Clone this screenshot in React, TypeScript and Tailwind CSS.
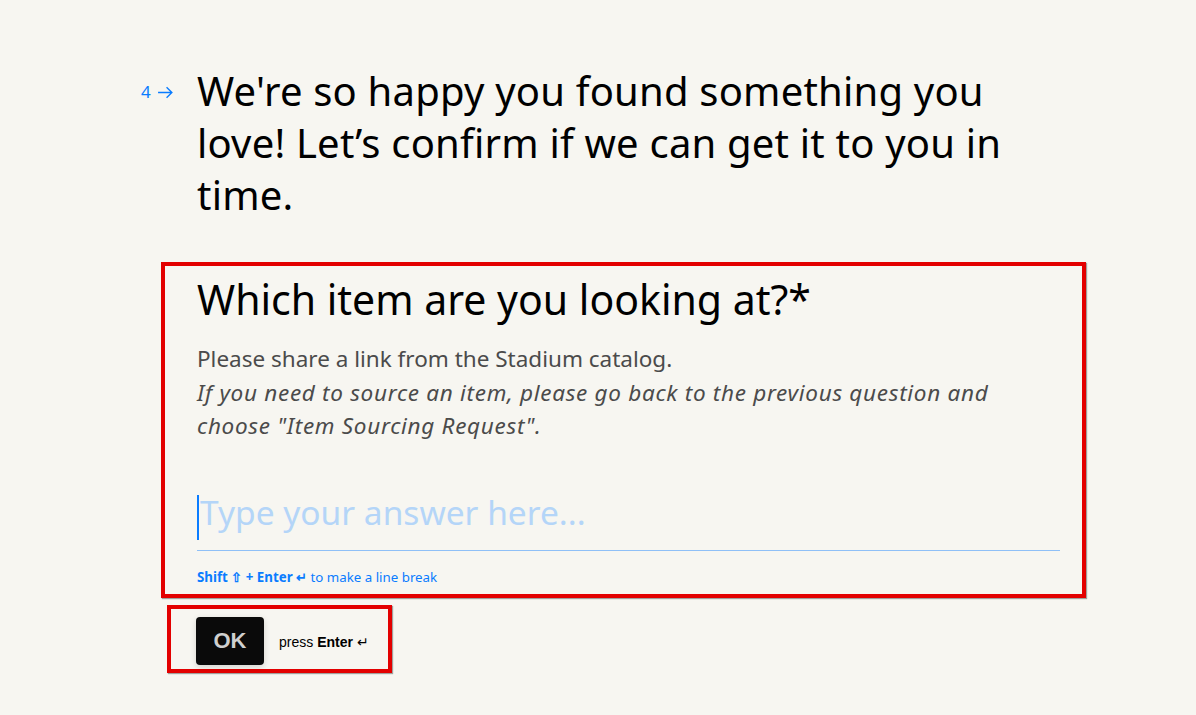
import React from "react";

const font = { fontFamily: '"Noto Sans", "Open Sans", sans-serif' };
const arial = { fontFamily: '"Liberation Sans", Arial, sans-serif' };

export default function App() {
  return (
    <div className="min-h-screen w-full bg-[#f7f6f1] text-black" style={font}>
      <div className="pl-[141px] pt-[65px]">
        {/* Question header */}
        <div className="flex">
          <div className="w-[56px] pt-[15px] flex items-start gap-[6px] text-[#0a7cff] text-[17px] leading-[24px]">
            <span>4</span>
            <svg width="17" height="17" viewBox="0 0 16 16" className="mt-[4px]" fill="none" stroke="currentColor" strokeWidth="1.3">
              <path d="M1 8h13M9 3l5 5-5 5" />
            </svg>
          </div>
          <h1 className="w-[864px] text-[40px] leading-[52px] tracking-[0.2px] font-normal">
            We're so happy you found something you love! Let’s confirm if we can get it to you in time.
          </h1>
        </div>

        {/* Question box */}
        <div className="ml-[20px] mt-[41px] w-[925px] border-4 border-[#e30000] shadow-[1px_1px_1px_rgba(0,0,0,0.35)] pl-[32px] pr-[22px] pt-[10px] pb-[9px]">
          <h2 className="text-[41px] leading-[46px] font-normal">
            Which item are you looking at?*
          </h2>
          <div className="mt-[20px] text-[22.5px] leading-[33.5px] text-[#4b4b4b]">
            <p>Please share a link from the Stadium catalog.</p>
            <p className="italic tracking-[0.7px]">
              If you need to source an item, please go back to the previous question and choose "Item Sourcing Request".
            </p>
          </div>

          <div className="mt-[46px] border-b border-[#8fc0f7] pb-[15px]">
            <div className="flex items-start h-[46px]">
              <span className="mt-[6px] w-[2px] h-[45px] bg-[#0a7cff] shrink-0" />
              <span className="ml-[1px] text-[33.5px] leading-[46px] text-[#b4d5f8]">Type your answer here...</span>
            </div>
          </div>

          <div className="mt-[18px] text-[13.3px] leading-[16px] text-[#0a7cff]">
            <span className="font-bold">Shift ⇧ + Enter ↵</span> to make a line break
          </div>
        </div>

        {/* OK button box */}
        <div className="ml-[26px] mt-[7px] w-[225px] h-[68px] border-4 border-[#e30000] shadow-[1px_1px_1px_rgba(0,0,0,0.35)] flex items-start pt-[8px] pl-[25px]">
          <button
            className="w-[68px] h-[48px] rounded-[4px] bg-[#0a0a0a] text-[#cfcfcf] text-[22px] font-bold shadow-[0_2px_6px_rgba(0,0,0,0.15)]"
            style={arial}
          >
            OK
          </button>
          <span className="ml-[15px] mt-[15px] text-[14px] text-black" style={arial}>
            press <span className="font-bold">Enter</span> ↵
          </span>
        </div>
      </div>
    </div>
  );
}
